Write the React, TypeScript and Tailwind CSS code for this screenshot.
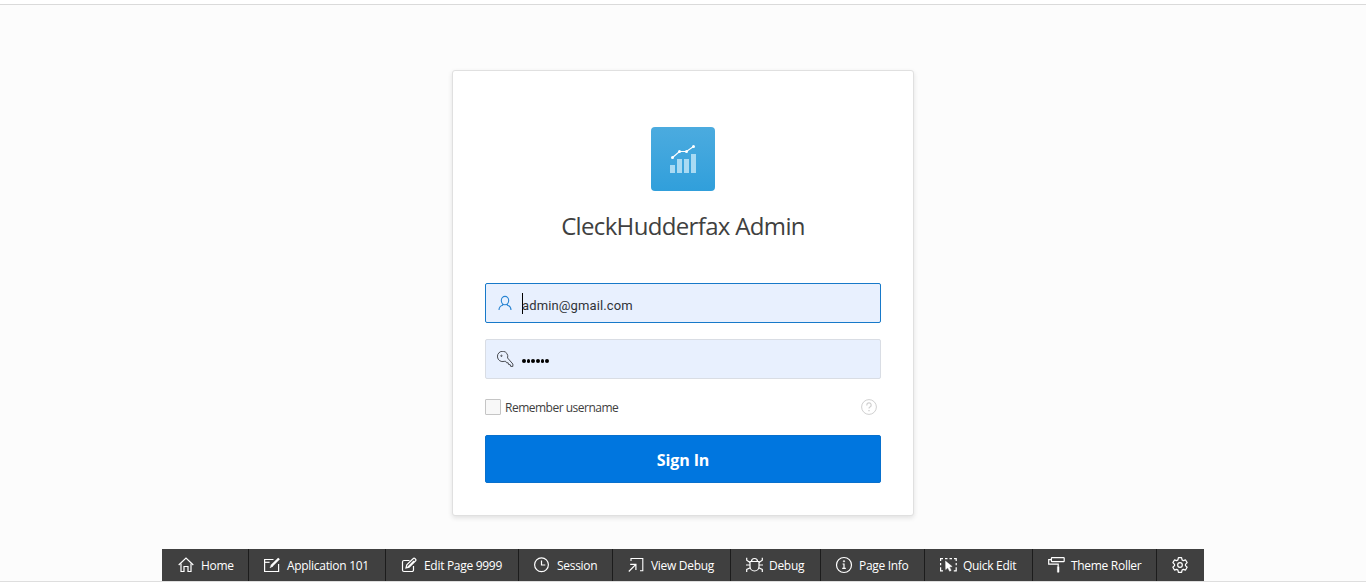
import React from "react";

const tools: { label: string; width: string; text: string; icon: React.ReactNode }[] = [
  {
    label: "Home", width: "w-[87px]", text: "tracking-[-0.3px]",
    icon: <><path d="M0.7 8 8 1l7.3 7" /><path d="M3 6.5V14.5H6V9.5h4v5h3V6.5" /></>,
  },
  {
    label: "Application 101", width: "w-[137px]", text: "tracking-[-0.3px]",
    icon: <><path d="M9.5 2.5H.6v12h14V7" /><path d="M.6 5.3h5" /><path d="M15 1.5 7.3 9.2" strokeWidth="2.4" /><path d="m7.5 8-1.5 2.8 2.7-1.5" fill="currentColor" strokeWidth=".5" /></>,
  },
  {
    label: "Edit Page 9999", width: "w-[133px]", text: "tracking-[-0.3px]",
    icon: <><path d="M8.5 3.5H3a1.5 1.5 0 0 0-1.5 1.5v8A1.5 1.5 0 0 0 3 14.5h8a1.5 1.5 0 0 0 1.5-1.5V9" /><path d="m5 11 .8-3.2 6.5-6.3a1.1 1.1 0 0 1 1.6 0l.7.7a1.1 1.1 0 0 1 0 1.6L8.1 10.2 5 11Zm1.7-.9L13 4" /></>,
  },
  {
    label: "Session", width: "w-[94px]", text: "tracking-[-0.3px]",
    icon: <><circle cx="7.5" cy="7.7" r="6.9" /><path d="M7.5 3.5V8h3.8" /></>,
  },
  {
    label: "View Debug", width: "w-[118px]", text: "tracking-[-0.3px]",
    icon: <><path d="M3 4V1.5h11.8v12.3H12" strokeWidth="1.1" /><path d="m.8 14.5 6.8-6.8M2.2 7.4h5.7v5.7" /></>,
  },
  {
    label: "Debug", width: "w-[90px]", text: "tracking-[-0.3px]",
    icon: <><path d="M4 4.5h9v5a4.5 4.5 0 0 1-9 0ZM5.5 4.5a3 3 0 0 1 6 0" /><path d="M.7.8v2.4L4 5.5M16.3.8v2.4L13 5.5M0 8h4m9 0h4M4.3 10.8.7 12.5V15M12.7 10.8l3.6 1.7V15" /></>,
  },
  {
    label: "Page Info", width: "w-[104px]", text: "tracking-[-0.3px]",
    icon: <><circle cx="8" cy="8" r="7.5" /><path d="M6.6 7H8v4.4m-1.8 0h3.6" /><circle cx="8" cy="4.3" r=".7" fill="currentColor" strokeWidth=".6" /></>,
  },
  {
    label: "Quick Edit", width: "w-[108px]", text: "tracking-[-0.3px]",
    icon: <><path d="M.6 4V1.6H3M5 1.6h2.5m2 0H12m2 0h2.2V4m0 2v2.3m0 2v3.5h-2.4M.6 6v2.3m0 2v3.5H3" /><path d="m5.5 4 .2 8.6 2.1-1.8 1.8 3.4 1.6-.8-1.7-3.3 2.7-.5Z" fill="currentColor" strokeWidth=".4" /></>,
  },
  {
    label: "Theme Roller", width: "w-[124px]", text: "tracking-[-0.3px]",
    icon: <><rect x="3.4" y=".6" width="12.8" height="4" rx=".6" /><path d="M3.2 2.6H.7v4.6h9.5v2.5" /><path d="M9.4 9.7H11v5.5H9.4Z" fill="currentColor" strokeWidth=".5" /></>,
  },
];

function Toolbar() {
  return (
    <nav className="flex h-8 w-[1042px] bg-[#404040] text-[12px] text-white">
      {tools.map((t) => (
        <button key={t.label} className={`flex h-full shrink-0 items-center border-r border-[#1c1c1c] pl-[15px] first:pl-4 ${t.width}`}>
          <svg className="size-4 shrink-0 overflow-visible" viewBox="0 0 16 16" fill="none" stroke="currentColor" strokeWidth="1.2">{t.icon}</svg>
          <span className={`ml-[7px] whitespace-nowrap pt-px ${t.text}`}>{t.label}</span>
        </button>
      ))}
      <button className="flex w-[47px] items-center pl-[15px]" aria-label="Settings">
        <svg className="size-4" viewBox="0 0 24 24" fill="none" stroke="currentColor" strokeWidth="1.8" strokeLinejoin="round">
          <path d="M9.6 1h4.8l.7 3.3 2 1.2 3.2-1.1 2.4 4.1L20.2 11v2l2.5 2.4-2.4 4.2-3.2-1.1-2 1.2-.7 3.3H9.6l-.7-3.3-2-1.2-3.2 1.1-2.4-4.2L3.8 13v-2L1.3 8.5l2.4-4.1 3.2 1.1 2-1.2Z" />
          <circle cx="12" cy="12" r="3.5" />
        </svg>
      </button>
    </nav>
  );
}

export default function App() {
  return (
    <div className="flex h-[585px] flex-col overflow-hidden bg-white font-['Open_Sans','Noto_Sans',sans-serif]">
      <div className="h-[5px] shrink-0 border-b border-[#dadada] bg-white" />
      <main className="flex h-[577px] shrink-0 flex-col items-center border-b border-[#dedede] bg-[#fcfcfc] pt-[65px]">
        <section className="flex h-[446px] w-[462px] shrink-0 flex-col rounded-[3px] border border-[#e0e0e0] bg-white px-8 shadow-[0_2px_5px_rgba(0,0,0,0.11)]">
          <div className="mt-14 flex size-16 items-center justify-center self-center rounded-[4px] bg-linear-to-b from-[#4babdf] to-[#309fdb]">
            <svg className="size-8" viewBox="0 0 32 32" fill="none">
              <path d="M3 22h5v8H3zM10 16h5v14h-5zM17 16h5v14h-5zM24 11h5v19h-5z" fill="#a9daf3" />
              <path d="m5.5 14.5 7-6h7l7-5" stroke="white" strokeWidth="1.2" />
              <g fill="white"><circle cx="5.5" cy="14.5" r="1.5" /><circle cx="12.5" cy="8.5" r="1.5" /><circle cx="19.5" cy="8.5" r="1.5" /><circle cx="26.5" cy="3.5" r="1.5" /></g>
            </svg>
          </div>
          <h1 className="mt-[19px] h-8 whitespace-nowrap text-center text-[24px] leading-8 tracking-[-0.66px] text-[#404040]">CleckHudderfax Admin</h1>
          <div className="mt-[41px] flex h-10 shrink-0 items-center rounded-[2px] border border-[#1779c9] bg-[#e8f0fe] pl-[11px]">
            <svg className="size-4 shrink-0 text-[#2884d2]" viewBox="0 0 16 16" fill="none" stroke="currentColor" strokeWidth="1.1">
              <ellipse cx="8" cy="5.6" rx="3.7" ry="4.2" /><path d="M5.7 8.9v1.3C3.5 10.8 2 12.2 2 15.1M10.3 8.9v1.3c2.2.6 3.7 2 3.7 4.9" />
            </svg>
            <span className="ml-[9px] h-[21px] w-px bg-black" />
            <span className="-ml-px mt-[5px] text-[13px] tracking-[0.12px] text-[#303338] font-[Roboto,sans-serif]">admin@gmail.com</span>
          </div>
          <div className="mt-4 flex h-10 shrink-0 items-center rounded-[2px] border border-[#d9dde4] bg-[#e8f0fe] pl-[11px]">
            <svg className="size-[17px] shrink-0 text-[#404247]" viewBox="0 0 18 18" fill="none" stroke="currentColor" strokeWidth="1">
              <path d="M11.2 7.4A5.5 5.5 0 1 0 7.6 11l1.5-.1 1 1.5 1.7.1.5 1.8 1.7.2.5 1.8h2.3v-2.5Z" /><circle cx="4.7" cy="5.1" r=".7" />
            </svg>
            <span className="ml-2 mt-1 flex gap-px">
              {Array.from({ length: 6 }, (_, i) => <i key={i} className="size-[3.7px] rounded-full bg-black" />)}
            </span>
          </div>
          <div className="mt-5 flex h-4 shrink-0 items-center">
            <span className="size-4 rounded-[1px] border border-[#c5c5c5] bg-[#f8f8f8]" />
            <span className="ml-1 pt-px text-[12px] tracking-[-0.5px] text-[#404040]">Remember username</span>
            <svg className="ml-auto mr-1 size-4 text-[#d0d0d0]" viewBox="0 0 16 16" fill="none" stroke="currentColor">
              <circle cx="8" cy="8" r="7.4" /><path d="M5.8 6.5V6a2.2 2.2 0 1 1 3.2 2c-.8.4-1 .7-1 1.6" strokeWidth="1.2" /><path d="M8 11v1.3" strokeWidth="1.4" />
            </svg>
          </div>
          <button className="mt-5 h-12 shrink-0 rounded-[2px] border border-[#0870cd] bg-[#0076df] pt-px text-[16px] font-bold tracking-[-0.1px] text-white">Sign In</button>
        </section>
        <div className="mt-[33px] shrink-0"><Toolbar /></div>
      </main>
    </div>
  );
}
